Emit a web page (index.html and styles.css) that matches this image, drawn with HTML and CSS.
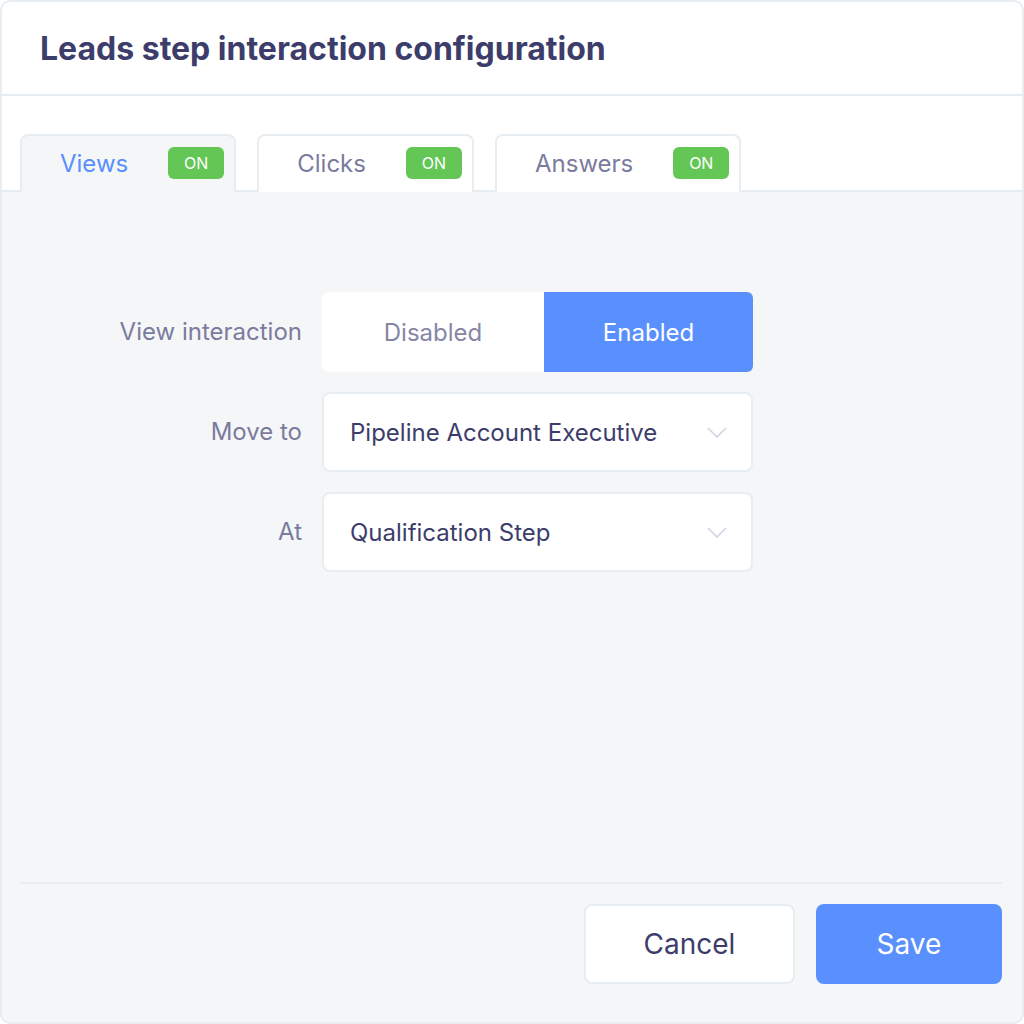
FILE: index.html
```html
<!DOCTYPE html>
<html lang="en">
	<head>
		<meta charset="UTF-8" />
		<meta name="viewport" content="width=device-width, initial-scale=1.0" />
		<title>Leads step interaction configuration</title>
		<link rel="stylesheet" href="styles.css">
	</head>
	<body>
		<div class="dialog">
			<div class="head">
				<h1>Leads step interaction configuration</h1>
			</div>

			<div class="tabs">
				<div class="tab active">
					<span class="tab-name">Views</span>
					<span class="badge">ON</span>
				</div>
				<div class="tab">
					<span class="tab-name">Clicks</span>
					<span class="badge">ON</span>
				</div>
				<div class="tab">
					<span class="tab-name">Answers</span>
					<span class="badge">ON</span>
				</div>
			</div>

			<div class="content">
				<div class="form">
					<label class="label">View interaction</label>
					<div class="toggle">
						<div class="toggle-opt">Disabled</div>
						<div class="toggle-opt on">Enabled</div>
					</div>

					<label class="label">Move to</label>
					<div class="select">
						<span>Pipeline Account Executive</span>
						<svg width="20" height="11" viewBox="0 0 20 11"><polyline points="1,1 10,10 19,1" fill="none" stroke="#d3d3e4" stroke-width="1.6" /></svg>
					</div>

					<label class="label">At</label>
					<div class="select">
						<span>Qualification Step</span>
						<svg width="20" height="11" viewBox="0 0 20 11"><polyline points="1,1 10,10 19,1" fill="none" stroke="#d3d3e4" stroke-width="1.6" /></svg>
					</div>
				</div>

				<div class="foot">
					<button class="btn cancel">Cancel</button>
					<button class="btn save">Save</button>
				</div>
			</div>
		</div>
	</body>
</html>
```

FILE: styles.css
```css
* {
	box-sizing: border-box;
}

body {
	margin: 0;
	font-family: "Inter", "Noto Sans", sans-serif;
	color: #3d3d6b;
}

.dialog {
	width: 1024px;
	height: 1024px;
	border: 2px solid #e7edf1;
	border-radius: 10px;
	overflow: hidden;
	display: flex;
	flex-direction: column;
	background: #f4f6f8;
}

.head {
	height: 94px;
	background: #fff;
	border-bottom: 2px solid #e7edf1;
	display: flex;
	align-items: center;
	padding-left: 38px;
	flex-shrink: 0;
}

.head h1 {
	margin: 0;
	font-size: 32px;
	font-weight: 700;
}

/* tabs */
.tabs {
	background: #fff;
	height: 96px;
	padding: 38px 0 0 18px;
	display: flex;
	align-items: flex-start;
	gap: 21px;
	border-bottom: 2px solid #e7edf1;
	flex-shrink: 0;
}

.tab {
	height: 58px;
	border: 2px solid #e7edf1;
	border-bottom: none;
	border-radius: 8px 8px 0 0;
	background: #fff;
	display: flex;
	align-items: center;
	padding: 0 10px 2px 38px;
}

.tab.active {
	background: #f4f6f8;
}

.tab-name {
	font-size: 24px;
	color: #7b7b9e;
	margin-right: 40px;
}

.tab.active .tab-name {
	color: #5a8ffe;
}

.badge {
	background: #63c655;
	color: #fff;
	font-size: 16px;
	border-radius: 6px;
	width: 56px;
	height: 32px;
	display: flex;
	align-items: center;
	justify-content: center;
}

/* body */
.content {
	flex: 1;
	display: flex;
	flex-direction: column;
	padding: 100px 20px 0 18px;
}

.form {
	display: grid;
	grid-template-columns: 282px 431px;
	column-gap: 20px;
	row-gap: 20px;
	flex: 1;
	align-content: start;
}

.label {
	font-size: 24px;
	color: #7b7b9e;
	text-align: right;
	align-self: center;
	padding-bottom: 2px;
}

.toggle {
	height: 80px;
	display: flex;
	border-radius: 6px;
	overflow: hidden;
	background: #fff;
}

.toggle-opt {
	width: 222px;
	display: flex;
	align-items: center;
	justify-content: center;
	font-size: 24px;
	color: #8686a6;
}

.toggle-opt.on {
	flex: 1;
	background: #5a8ffe;
	color: #fff;
}

.select {
	height: 80px;
	background: #fff;
	border: 2px solid #e7edf1;
	border-radius: 8px;
	display: flex;
	align-items: center;
	justify-content: space-between;
	padding: 0 24px 0 26px;
	font-size: 24px;
}

.foot {
	border-top: 2px solid #e7edf1;
	display: flex;
	justify-content: flex-end;
	gap: 21px;
	padding: 20px 0 38px;
}

.btn {
	height: 80px;
	border-radius: 8px;
	font-family: inherit;
	font-size: 28px;
	cursor: pointer;
}

.cancel {
	width: 211px;
	background: #fff;
	border: 2px solid #e7edf1;
	color: #3d3d6b;
}

.save {
	width: 186px;
	background: #5a8ffe;
	border: none;
	color: #fff;
}
```
